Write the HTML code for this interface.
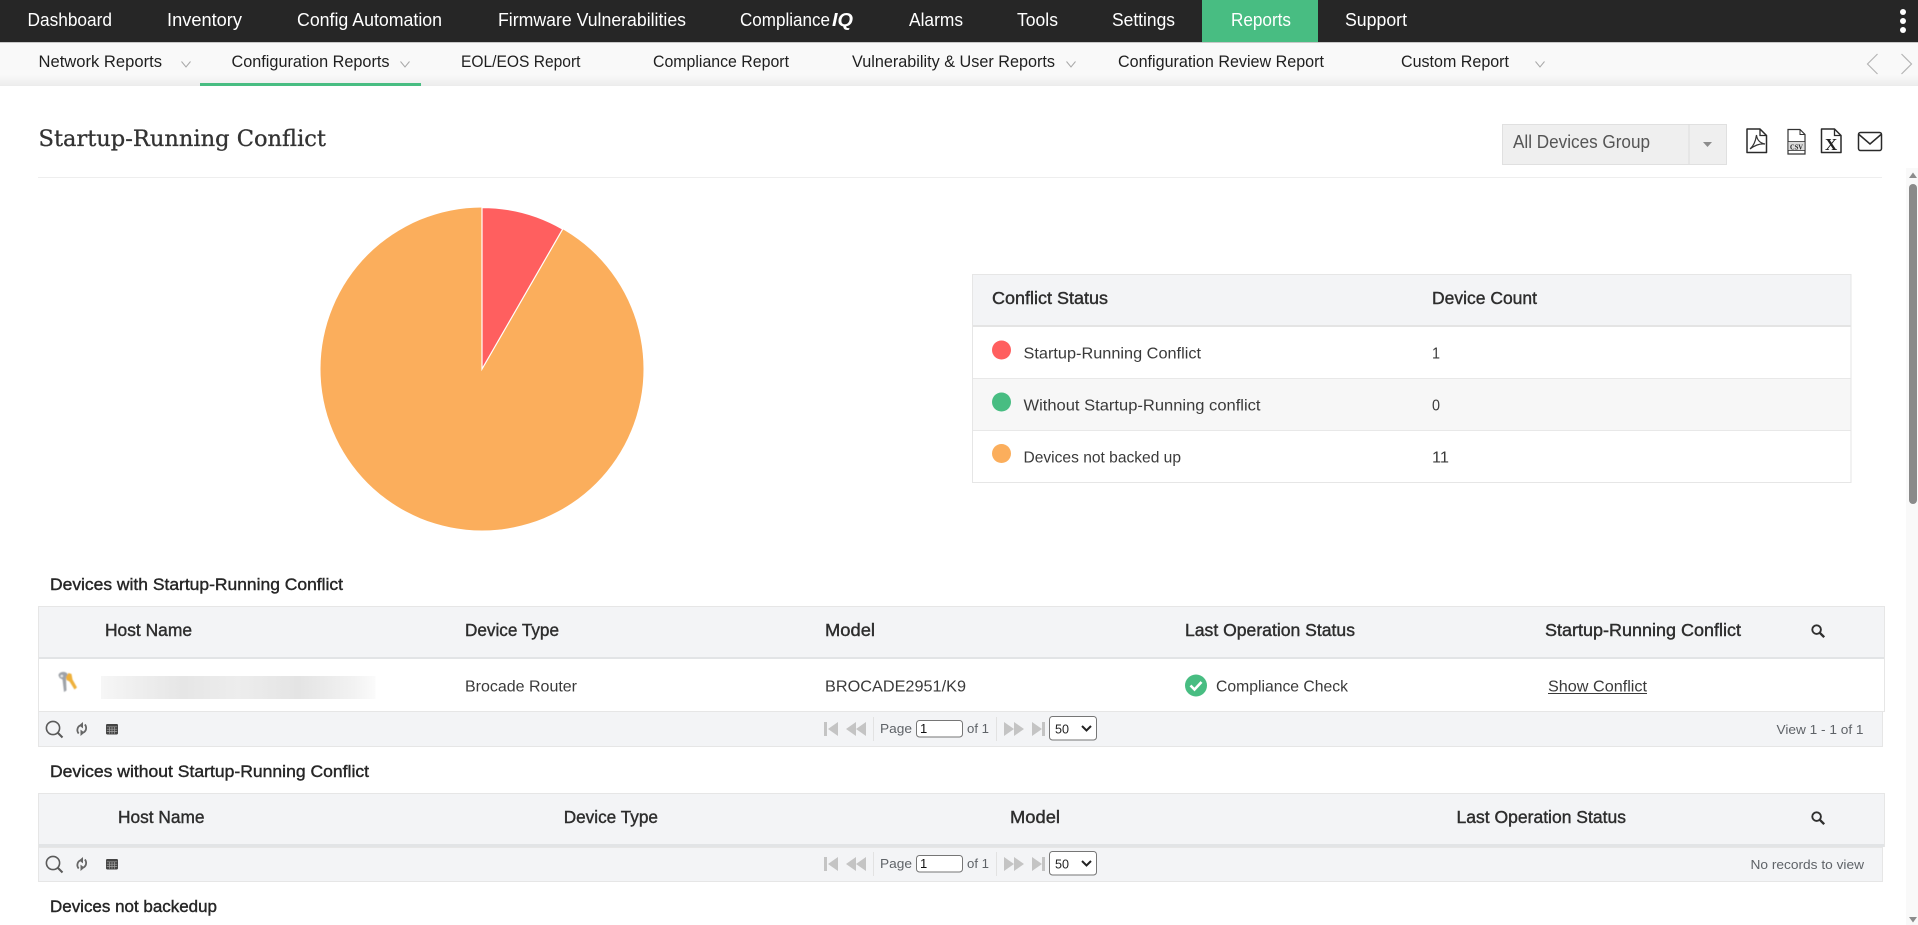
<!DOCTYPE html>
<html lang="en">
<head>
<meta charset="utf-8">
<title>Startup-Running Conflict</title>
<style>
html,body{margin:0;padding:0;width:1918px;height:925px;overflow:hidden;background:#fff}
svg{display:block;position:absolute;left:0;top:0}
text{font-family:"Liberation Sans",sans-serif;white-space:pre}
.nav{font-size:18px;fill:#fff}
.sub{font-size:16.5px;fill:#1f1f1f}
.th{font-size:17.5px;fill:#2d2d2d;stroke:#2d2d2d;stroke-width:.4px}
.sec{font-size:17px;fill:#262626;stroke:#262626;stroke-width:.4px}
.td{font-size:16px;fill:#3a3a3a}
.pg{font-size:13px;fill:#5f6368}
.chev{fill:none;stroke:#a8a8a8;stroke-width:1}
.ic{fill:#fff;stroke:#2a2a2a;stroke-width:1.5;stroke-linejoin:round}
.dis{fill:#c4c4c4}
</style>
</head>
<body>
<svg width="1918" height="925" viewBox="0 0 1918 925" xmlns="http://www.w3.org/2000/svg">
<defs>
<filter id="soft" x="-20%" y="-20%" width="140%" height="140%"><feGaussianBlur stdDeviation=".45"/></filter>
<linearGradient id="subshade" x1="0" y1="0" x2="0" y2="1"><stop offset="0" stop-color="#f9f9f9"/><stop offset="1" stop-color="#ececec"/></linearGradient>
<linearGradient id="blurbar" x1="0" y1="0" x2="1" y2="0">
<stop offset="0" stop-color="#f6f6f6"/><stop offset=".12" stop-color="#efefef"/><stop offset=".3" stop-color="#e6e6e6"/><stop offset=".5" stop-color="#ededed"/><stop offset=".72" stop-color="#e4e4e4"/><stop offset=".92" stop-color="#f2f2f2"/><stop offset="1" stop-color="#fbfbfb"/>
</linearGradient>
<g id="mag"><circle cx="8" cy="8" r="6.6" fill="none" stroke="#5a5a5a" stroke-width="1.6"/><path d="M13 13l4.5 4.5" stroke="#5a5a5a" stroke-width="2" fill="none"/></g>
<g id="refresh"><path d="M4.500 3.500A5.200 5.200 0 0 0 3.200 11.500M8 10.500A5.200 5.200 0 0 0 9.300 2.500" fill="none" stroke="#666" stroke-width="1.800"/><path d="M7.500 0L3.500 3.400l4 3zM5 14l4-3.400-4-3z" fill="#666"/></g>
<g id="grid"><rect x="0" y="0" width="12" height="10.500" rx="1.200" fill="#444"/><path d="M0.800 2.800h10.400M0.800 5.200h10.400M0.800 7.600h10.400M3.400 2.800v7M6 2.800v7M8.600 2.800v7" stroke="#a5a5a5" stroke-width=".7"/></g>
<g id="pager">
<rect x="824" y="0" width="3" height="14" class="dis"/><path d="M838 0v14l-10-7z" class="dis"/>
<path d="M856 0v14l-10-7zM866 0v14l-10-7z" class="dis"/>
<rect x="873" y="-5" width="1" height="24" fill="#e2e2e2"/>
<rect x="996" y="-5" width="1" height="24" fill="#e2e2e2"/>
<path d="M1004 0v14l10-7zM1014 0v14l10-7z" class="dis"/>
<path d="M1032 0v14l10-7z" class="dis"/><rect x="1042" y="0" width="3" height="14" class="dis"/>
<rect x="916.500" y="-1.500" width="46" height="16.500" rx="3" fill="#fff" stroke="#767676"/>
<rect x="1049.500" y="-5.500" width="47" height="23.500" rx="3" fill="#fff" stroke="#767676"/>
<path d="M1082 4l4.500 4.500L1091 4" fill="none" stroke="#222" stroke-width="2"/>
</g>
<g id="search"><circle cx="5.600" cy="5.600" r="4.300" fill="none" stroke="#2f2f2f" stroke-width="1.900"/><path d="M8.800 8.800l4.400 4.400" stroke="#2f2f2f" stroke-width="2.400" fill="none"/></g>
</defs>

<!-- top navigation -->
<rect x="0" y="0" width="1918" height="42" fill="#262626"/>
<rect x="0" y="42" width="1918" height="1" fill="#c8c8c8"/>
<rect x="1202" y="0" width="116" height="42" fill="#48bd82"/>
<text class="nav" x="27.500" y="26" textLength="84.500" lengthAdjust="spacingAndGlyphs">Dashboard</text>
<text class="nav" x="167" y="26" textLength="75" lengthAdjust="spacingAndGlyphs">Inventory</text>
<text class="nav" x="297" y="26" textLength="145" lengthAdjust="spacingAndGlyphs">Config Automation</text>
<text class="nav" x="498" y="26" textLength="188" lengthAdjust="spacingAndGlyphs">Firmware Vulnerabilities</text>
<text class="nav" x="740" y="26" textLength="90" lengthAdjust="spacingAndGlyphs">Compliance</text>
<text class="nav" x="832" y="26" textLength="21" lengthAdjust="spacingAndGlyphs" font-weight="700" font-style="italic">IQ</text>
<text class="nav" x="909" y="26" textLength="54" lengthAdjust="spacingAndGlyphs">Alarms</text>
<text class="nav" x="1017" y="26" textLength="41" lengthAdjust="spacingAndGlyphs">Tools</text>
<text class="nav" x="1112" y="26" textLength="63" lengthAdjust="spacingAndGlyphs">Settings</text>
<text class="nav" x="1231" y="26" textLength="60" lengthAdjust="spacingAndGlyphs">Reports</text>
<text class="nav" x="1345" y="26" textLength="62" lengthAdjust="spacingAndGlyphs">Support</text>
<circle cx="1903" cy="12" r="3" fill="#fff"/><circle cx="1903" cy="21" r="3" fill="#fff"/><circle cx="1903" cy="30" r="3" fill="#fff"/>

<!-- sub navigation -->
<rect x="0" y="43" width="1918" height="43" fill="#f9f9f9"/>
<rect x="0" y="75" width="1918" height="11" fill="url(#subshade)"/>
<rect x="200" y="83" width="221" height="3" fill="#48bd82"/>
<text class="sub" x="38.500" y="67" textLength="123.500" lengthAdjust="spacingAndGlyphs">Network Reports</text>
<path class="chev" d="M181.500 61.500l4.500 5.500 4.500-5.500"/>
<text class="sub" x="231.500" y="67" textLength="158" lengthAdjust="spacingAndGlyphs">Configuration Reports</text>
<path class="chev" d="M400.500 61.500l4.500 5.500 4.500-5.500"/>
<text class="sub" x="461" y="67" textLength="119.500" lengthAdjust="spacingAndGlyphs">EOL/EOS Report</text>
<text class="sub" x="653" y="67" textLength="136" lengthAdjust="spacingAndGlyphs">Compliance Report</text>
<text class="sub" x="852" y="67" textLength="203" lengthAdjust="spacingAndGlyphs">Vulnerability &amp; User Reports</text>
<path class="chev" d="M1066.500 61.500l4.500 5.500 4.500-5.500"/>
<text class="sub" x="1118" y="67" textLength="206" lengthAdjust="spacingAndGlyphs">Configuration Review Report</text>
<text class="sub" x="1401" y="67" textLength="108" lengthAdjust="spacingAndGlyphs">Custom Report</text>
<path class="chev" d="M1535.500 61.500l4.500 5.500 4.500-5.500"/>
<path d="M1877.500 54l-10 10 10 10M1901.500 54l10 10-10 10" fill="none" stroke="#b5b5b5" stroke-width="1.200"/>

<!-- page title -->
<text x="38.500" y="146" textLength="287.500" lengthAdjust="spacingAndGlyphs" font-size="22" fill="#333" stroke="#333" stroke-width=".3" style="font-family:'DejaVu Serif',serif">Startup-Running Conflict</text>
<rect x="38" y="177" width="1844" height="1" fill="#eeeeee"/>

<!-- group select -->
<rect x="1502.500" y="124.500" width="224" height="40" fill="#efefef" stroke="#e0e0e0"/>
<rect x="1688.500" y="124" width="1" height="40" fill="#dcdcdc"/>
<text x="1513" y="148" font-size="18" fill="#555" textLength="137" lengthAdjust="spacingAndGlyphs">All Devices Group</text>
<path d="M1703 142h9l-4.500 5z" fill="#8c8c8c"/>

<!-- export icons -->
<path class="ic" d="M1747 129h13l6.500 6.500V152.500h-19.500z"/><path d="M1760 129v6.500h6.500" fill="none" stroke="#2a2a2a" stroke-width="1.300"/>
<path d="M1750 149c3-2.500 5.500-7 6.500-14 .5 5 3.500 8 8.500 9-4-.5-9 .5-15 5z" fill="none" stroke="#333" stroke-width="1.200"/>
<path d="M1788 129.500h12l5 5V154h-17z" fill="#fff" stroke="#333" stroke-width="1.200"/><path d="M1800 129.500v5h5" fill="none" stroke="#333"/>
<rect x="1788" y="141.500" width="17" height="9" fill="#dcdcdc" stroke="#333" stroke-width=".8"/>
<text x="1790" y="149.500" font-size="7.500" font-weight="700" fill="#222" textLength="13" lengthAdjust="spacingAndGlyphs" style="font-family:'Liberation Serif',serif">CSV</text>
<path class="ic" d="M1821.500 129h13l6.500 6.500V152.500h-19.500z"/><path d="M1834.500 129v6.500h6.500" fill="none" stroke="#2a2a2a" stroke-width="1.300"/>
<text x="1825" y="150" font-size="17" font-weight="700" fill="#222" style="font-family:'Liberation Serif',serif">X</text>
<rect x="1858.500" y="132.500" width="23" height="18" rx="2" class="ic"/><path d="M1859 134.500l11 9.500 11-9.500" fill="none" stroke="#2a2a2a" stroke-width="1.500"/>

<!-- pie -->
<circle cx="482" cy="369" r="161.500" fill="#fbae5c"/>
<path d="M482 369V207.500A161.500 161.500 0 0 1 562.700 229.100Z" fill="#ff5f5f" stroke="#fff" stroke-width="1.200"/>

<!-- legend table -->
<rect x="972.500" y="274.500" width="878.500" height="208" fill="#fff" stroke="#e6e6e6"/>
<rect x="973" y="275" width="877.500" height="50" fill="#f3f4f6"/>
<rect x="973" y="325" width="877.500" height="2" fill="#e4e4e4"/>
<rect x="973" y="379" width="877.500" height="52" fill="#f7f7f7"/>
<rect x="973" y="378" width="877.500" height="1" fill="#e8e8e8"/>
<rect x="973" y="430" width="877.500" height="1" fill="#e8e8e8"/>
<text class="th" x="992" y="304" textLength="116" lengthAdjust="spacingAndGlyphs">Conflict Status</text>
<text class="th" x="1432" y="304" textLength="105" lengthAdjust="spacingAndGlyphs">Device Count</text>
<circle cx="1001.500" cy="350" r="9.500" fill="#ff5f5f"/>
<text class="td" x="1023.500" y="358.500" textLength="177.500" lengthAdjust="spacingAndGlyphs">Startup-Running Conflict</text>
<text class="td" x="1432" y="358.500" textLength="8" lengthAdjust="spacingAndGlyphs">1</text>
<circle cx="1001.500" cy="402" r="9.500" fill="#48bd82"/>
<text class="td" x="1023.500" y="410.500" textLength="237" lengthAdjust="spacingAndGlyphs">Without Startup-Running conflict</text>
<text class="td" x="1432" y="410.500" textLength="8" lengthAdjust="spacingAndGlyphs">0</text>
<circle cx="1001.500" cy="453.500" r="9.500" fill="#fbae5c"/>
<text class="td" x="1023.500" y="462.500" textLength="157.500" lengthAdjust="spacingAndGlyphs">Devices not backed up</text>
<text class="td" x="1432" y="462.500" textLength="17" lengthAdjust="spacingAndGlyphs">11</text>

<!-- section 1 -->
<text class="sec" x="50" y="590" textLength="293" lengthAdjust="spacingAndGlyphs">Devices with Startup-Running Conflict</text>
<rect x="38.500" y="606.500" width="1846" height="105" fill="#fff" stroke="#e6e6e6"/>
<rect x="39" y="607" width="1845" height="50" fill="#f3f4f6"/>
<rect x="39" y="657" width="1845" height="2" fill="#e2e4e6"/>
<rect x="38.500" y="711.500" width="1844" height="35" fill="#f3f4f6" stroke="#e6e6e6"/>
<text class="th" x="105" y="636" textLength="87" lengthAdjust="spacingAndGlyphs">Host Name</text>
<text class="th" x="465" y="636" textLength="94" lengthAdjust="spacingAndGlyphs">Device Type</text>
<text class="th" x="825" y="636" textLength="50" lengthAdjust="spacingAndGlyphs">Model</text>
<text class="th" x="1185" y="636" textLength="170" lengthAdjust="spacingAndGlyphs">Last Operation Status</text>
<text class="th" x="1545" y="636" textLength="196" lengthAdjust="spacingAndGlyphs">Startup-Running Conflict</text>
<use href="#search" x="1811" y="624"/>
<!-- key icon -->
<g filter="url(#soft)">
<path d="M58.500 675.500c0-2.500 3-4 6-3.500 2.500.5 3.500 2 3 4.500l-1.500 2 .5 12-2.500 1.500-1.500-12.500-2.800-1.500z" fill="#9ea2a8"/>
<circle cx="61.800" cy="676" r="1.300" fill="#e8e8e8"/>
<path d="M66 677l2.500-4 3 1 1 5.500 4.500 8-2.500 2-5-8-3-1.500z" fill="#eeb03a"/>
</g>
<rect x="101" y="676" width="274.500" height="23" fill="url(#blurbar)"/>
<text class="td" x="465" y="691.500" textLength="112" lengthAdjust="spacingAndGlyphs">Brocade Router</text>
<text class="td" x="825" y="691.500" textLength="141" lengthAdjust="spacingAndGlyphs">BROCADE2951/K9</text>
<circle cx="1196" cy="685.500" r="11" fill="#48bd82"/>
<path d="M1190.500 685.500l4 4 7-7.500" fill="none" stroke="#fff" stroke-width="2.600"/>
<text class="td" x="1216" y="691.500" textLength="132" lengthAdjust="spacingAndGlyphs">Compliance Check</text>
<text class="td" x="1548" y="691.500" textLength="99" lengthAdjust="spacingAndGlyphs">Show Conflict</text>
<rect x="1548" y="693" width="99" height="1" fill="#3a3a3a"/>
<use href="#mag" x="45" y="720"/>
<use href="#refresh" x="75.500" y="722"/>
<use href="#grid" x="106" y="724"/>
<use href="#pager" x="0" y="722"/>
<text class="pg" x="880" y="733" textLength="32" lengthAdjust="spacingAndGlyphs">Page</text>
<text x="920" y="733" font-size="13" fill="#111">1</text>
<text class="pg" x="967" y="733" textLength="22" lengthAdjust="spacingAndGlyphs">of 1</text>
<text x="1055" y="733.500" font-size="13" fill="#222" textLength="14" lengthAdjust="spacingAndGlyphs">50</text>
<text class="pg" x="1776.500" y="734" textLength="87" lengthAdjust="spacingAndGlyphs">View 1 - 1 of 1</text>

<!-- section 2 -->
<text class="sec" x="50" y="777" textLength="319" lengthAdjust="spacingAndGlyphs">Devices without Startup-Running Conflict</text>
<rect x="38.500" y="793.500" width="1846" height="53" fill="#f3f4f6" stroke="#e6e6e6"/>
<rect x="39" y="844" width="1845" height="3" fill="#e2e4e6"/>
<rect x="38.500" y="847.500" width="1844" height="34" fill="#f3f4f6" stroke="#e6e6e6"/>
<text class="th" x="118" y="823" textLength="86.500" lengthAdjust="spacingAndGlyphs">Host Name</text>
<text class="th" x="563.700" y="823" textLength="94.300" lengthAdjust="spacingAndGlyphs">Device Type</text>
<text class="th" x="1010" y="823" textLength="50" lengthAdjust="spacingAndGlyphs">Model</text>
<text class="th" x="1456.500" y="823" textLength="169.500" lengthAdjust="spacingAndGlyphs">Last Operation Status</text>
<use href="#search" x="1811" y="811"/>
<use href="#mag" x="45" y="855"/>
<use href="#refresh" x="75.500" y="857"/>
<use href="#grid" x="106" y="859"/>
<use href="#pager" x="0" y="857"/>
<text class="pg" x="880" y="868" textLength="32" lengthAdjust="spacingAndGlyphs">Page</text>
<text x="920" y="868" font-size="13" fill="#111">1</text>
<text class="pg" x="967" y="868" textLength="22" lengthAdjust="spacingAndGlyphs">of 1</text>
<text x="1055" y="868.500" font-size="13" fill="#222" textLength="14" lengthAdjust="spacingAndGlyphs">50</text>
<text class="pg" x="1750.500" y="869" textLength="113.500" lengthAdjust="spacingAndGlyphs">No records to view</text>

<!-- section 3 -->
<text class="sec" x="50" y="912" textLength="167" lengthAdjust="spacingAndGlyphs">Devices not backedup</text>

<!-- scrollbar -->
<rect x="1906" y="168" width="12" height="757" fill="#f9f9f9"/>
<path d="M1913 172.500l4 5.500h-8z" fill="#8c8c8c"/>
<rect x="1909" y="184" width="8" height="320" rx="4" fill="#8a8a8a"/>
<path d="M1909 917h8l-4 5.500z" fill="#8c8c8c"/>
</svg>
</body>
</html>
